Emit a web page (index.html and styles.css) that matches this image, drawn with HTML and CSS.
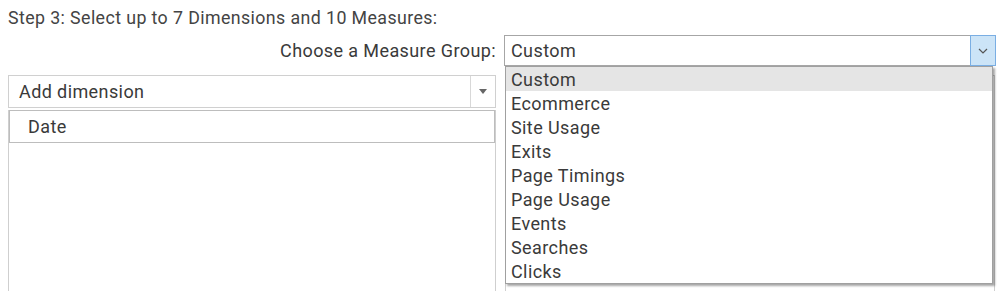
FILE: index.html
```html
<!DOCTYPE html>
<html>
<head>
<meta charset="utf-8">
<link rel="stylesheet" href="styles.css">
</head>
<body>
<div class="page">
  <div class="title">Step 3: Select up to 7 Dimensions and 10 Measures:</div>
  <div class="grid">
    <div class="label">Choose a Measure Group:</div>
    <div class="select-wrap">
      <div class="select">
        <span class="select-text">Custom</span>
        <span class="select-btn">
          <svg width="10" height="6" viewBox="0 0 10 6"><path d="M1 1 L5 5 L9 1" fill="none" stroke="#555" stroke-width="1.2"/></svg>
        </span>
      </div>
      <ul class="menu">
        <li class="menu-item active">Custom</li>
        <li class="menu-item">Ecommerce</li>
        <li class="menu-item">Site Usage</li>
        <li class="menu-item">Exits</li>
        <li class="menu-item">Page Timings</li>
        <li class="menu-item">Page Usage</li>
        <li class="menu-item">Events</li>
        <li class="menu-item">Searches</li>
        <li class="menu-item">Clicks</li>
      </ul>
    </div>
    <div class="col">
      <div class="combo">
        <span class="combo-text">Add dimension</span>
        <span class="combo-btn"><span class="tri"></span></span>
      </div>
      <div class="listbox">
        <div class="list-item">Date</div>
      </div>
    </div>
    <div class="col">
      <div class="measures"></div>
    </div>
  </div>
</div>
</body>
</html>
```
FILE: styles.css
```css
* { box-sizing: border-box; }
html, body { margin: 0; padding: 0; background: #fff; }
body {
  font-family: Roboto, "Liberation Sans", sans-serif;
  font-size: 18px;
  letter-spacing: 0.4px;
  color: #3a3a3a;
  width: 1000px;
  height: 291px;
  overflow: hidden;
}
.page { padding: 0 5px 0 8px; }
.title {
  height: 35px;
  line-height: 36px;
  font-size: 17.8px;
  color: #444;
}
.grid {
  display: grid;
  grid-template-columns: 488px 491px;
  column-gap: 8px;
  grid-template-rows: 31px 1fr;
  row-gap: 9px;
}
.label {
  text-align: right;
  line-height: 31px;
}
.select-wrap { position: relative; }
.select {
  height: 31px;
  border: 1px solid #a6a6a6;
  display: flex;
  align-items: center;
  background: #fff;
}
.select-text {
  flex: 1;
  padding-left: 6px;
}
.select-btn {
  width: 26px;
  height: 31px;
  margin: -1px -2px -1px 0;
  background: #cce4f7;
  border: 1px solid #7aaee3;
  display: flex;
  align-items: center;
  justify-content: center;
}
.menu {
  position: absolute;
  left: 1px;
  top: 31px;
  width: 488px;
  margin: 0;
  padding: 0;
  list-style: none;
  background: #fff;
  border: 1px solid #a0a0a0;
  box-shadow: 2px 2px 2px rgba(0,0,0,0.35);
  z-index: 2;
}
.menu-item {
  height: 24px;
  line-height: 25px;
  padding-left: 5px;
}
.menu-item.active { background: #e5e5e5; }
.col { display: flex; flex-direction: column; height: 220px; }
.combo {
  height: 33px;
  border: 1px solid #d0d0d0;
  display: flex;
  align-items: center;
}
.combo-text {
  flex: 1;
  padding-left: 10px;
}
.combo-btn {
  width: 25px;
  height: 100%;
  border-left: 1px solid #d8d8d8;
  display: flex;
  align-items: center;
  justify-content: center;
}
.tri {
  width: 0; height: 0;
  border-left: 4px solid transparent;
  border-right: 4px solid transparent;
  border-top: 5px solid #666;
}
.listbox {
  margin-top: 2px;
  flex: 1;
  border: 1px solid #cfcfcf;
  border-bottom: none;
}
.list-item {
  height: 33px;
  border: 1px solid #bdbdbd;
  margin: -1px 0 0 0;
  line-height: 31px;
  padding-left: 18px;
}
.measures {
  flex: 1;
  border: 1px solid #cfcfcf;
  margin-left: 1px;
}
```
